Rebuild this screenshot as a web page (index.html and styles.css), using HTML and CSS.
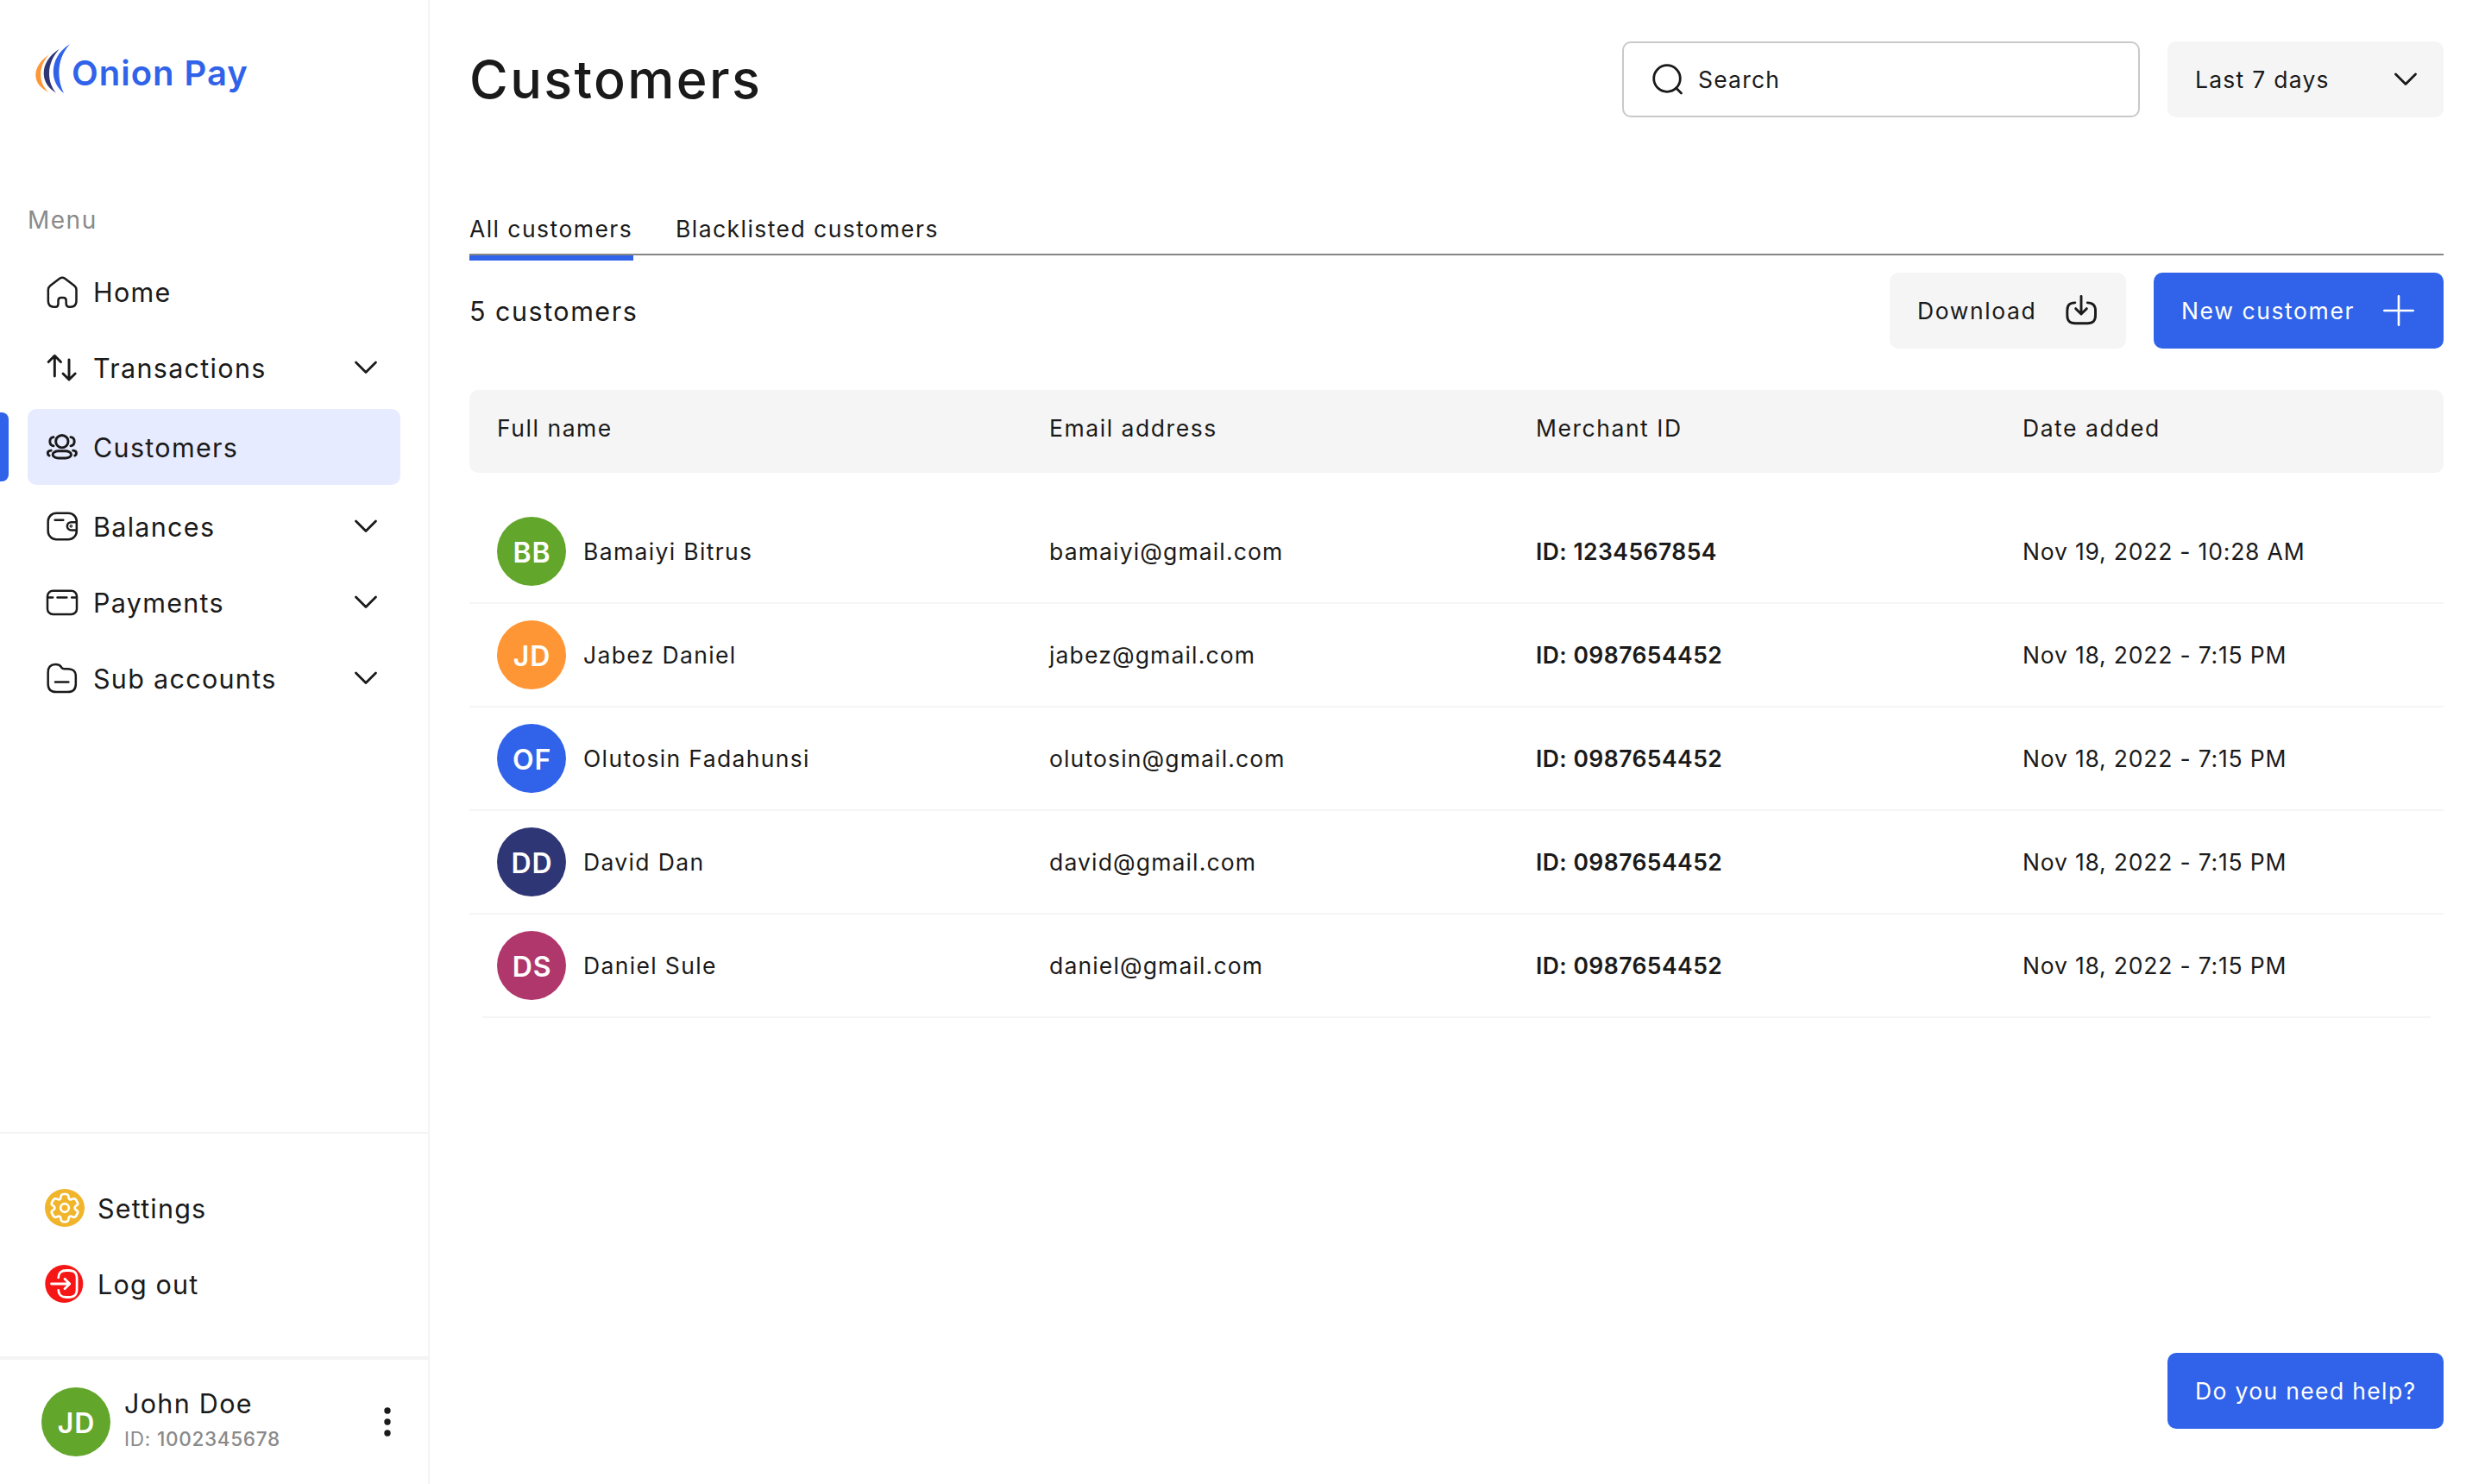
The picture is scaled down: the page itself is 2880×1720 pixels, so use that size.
FILE: index.html
```
<!DOCTYPE html>
<html lang="en">
<head>
    <meta charset="UTF-8">
    <meta name="viewport" content="width=device-width, initial-scale=1.0">
    <title>Onion Pay - Customers</title>
    <link rel="stylesheet" href="styles.css">
</head>
<body>
    <!-- shared icon -->
    <svg class="sprite" width="0" height="0">
        <symbol id="chevron" viewBox="0 0 30 20">
            <path d="M3.5 4 15 15.5 26.5 4" fill="none" stroke="currentColor" stroke-width="2.8" stroke-linecap="round" stroke-linejoin="round"/>
        </symbol>
    </svg>

    <div class="sidebar">
        <div class="logo">
            <svg width="40" height="57" viewBox="41 51 40 57">
                <path fill="#ff9635" d="M56.7 63.3C46 71 41.3 79 41.3 87c0 9 6.500 16 15.700 20.300C50 102 47.200 94 47.200 86.500 47.200 78 50.500 70.500 56.700 63.300Z"/>
                <path fill="#2f3676" d="M68.700 56.700C56 65 50.700 75 50.700 85c0 9.500 5.500 17.500 14.300 22.700C59.500 101 57 93.500 57 85c0-10.500 4.500-20 11.700-28.300Z"/>
                <path fill="#3063e9" d="M81 51C67 60 61.800 71.500 61.800 83.500 61.800 93.500 66.500 102 74 108c-3.800-7.500-5.600-15.500-5.600-24C68.400 71 73 60 81 51Z"/>
            </svg>
            <span>Onion Pay</span>
        </div>

        <p class="menu-title">Menu</p>
        <ul class="menu">
            <li>
                <svg class="icon" viewBox="0 0 24 24"><path d="M9.300 20.200v-2c0-1.400.6-2 2-2h1.500c1.400 0 2 .6 2 2v2.100c0 1.600.6 2.300 2 2.300h1c2.700 0 4.100-1.500 4.100-4V10.700c0-1.300-.4-2-1.500-2.900L13.900 2.900c-1.100-.8-2.500-.8-3.600 0L3.800 7.800C2.700 8.700 2.300 9.400 2.300 10.700v7.900c0 2.500 1.400 4 4.100 4h1c1.300 0 1.900-.8 1.900-2.400Z"/></svg>
                <a href="#">Home</a>
            </li>
            <li>
                <svg class="icon bold" viewBox="0 0 24 24"><path d="M6.800 18V4M2.500 8.100 6.800 3.800l4.300 4.300M16.800 6.500v13.800M12.600 16.200l4.200 4.200 4.300-4.200"/></svg>
                <a href="#">Transactions</a>
                <svg class="chevron"><use href="#chevron"/></svg>
            </li>
            <li class="active">
                <svg class="icon bold" viewBox="0 0 24 24"><circle cx="11.900" cy="8.200" r="4.300"/><rect x="5.500" y="14.900" width="12.800" height="4.900" rx="4" ry="2.450"/><path d="M6 5.200C4.500 5.400 3.500 6.600 3.500 8.200S4.500 11 6 11.300M18 5.200c1.500.2 2.500 1.400 2.500 3s-1 2.800-2.500 3.100M4.300 14.500c-1.300.1-2.300.8-2.300 1.900 0 .8.400 1.300 1 1.600M19.600 14.500c1.300.1 2.300.8 2.300 1.900 0 .8-.4 1.300-1 1.600"/></svg>
                <a href="#">Customers</a>
            </li>
            <li>
                <svg class="icon" viewBox="0 0 24 24"><rect x="2.200" y="2.800" width="19.900" height="18.300" rx="5.800"/><path d="M7 7.600h5.800M22 9.100h-3.500c-1.800 0-3 1.200-3 2.800s1.200 2.800 3 2.800H22"/><circle cx="18.200" cy="11.900" r=".35"/></svg>
                <a href="#">Balances</a>
                <svg class="chevron"><use href="#chevron"/></svg>
            </li>
            <li>
                <svg class="icon" viewBox="0 0 24 24"><rect x="1.800" y="4" width="20.400" height="16.400" rx="3.800"/><path d="M2 8.700h3.500M8.700 8.700h6.500M18.700 8.700h3.400"/></svg>
                <a href="#">Payments</a>
                <svg class="chevron"><use href="#chevron"/></svg>
            </li>
            <li>
                <svg class="icon" viewBox="0 0 24 24"><path d="M2.200 8c0-3.900 1.700-5.600 5.200-5.600 2.200 0 2.900.3 3.700 1.500l.6.9c.4.600.8.700 1.800.7h2.200c4.200 0 5.800 1.500 5.800 5.300v5.200c0 3.900-1.800 5.600-5.700 5.600H8c-4 0-5.800-1.700-5.800-5.600Z"/><path d="M7.200 14.700h9.200"/></svg>
                <a href="#">Sub accounts</a>
                <svg class="chevron"><use href="#chevron"/></svg>
            </li>
        </ul>

        <ul class="menu menu-bottom">
            <li>
                <svg class="round-icon" viewBox="0 0 46 44">
                    <ellipse cx="23" cy="22" rx="23" ry="22" fill="#f1b52c"/>
                    <g transform="translate(23 22) rotate(90) scale(1.600) translate(-12 -12)" fill="none" stroke="#fff" stroke-width="1.700">
                        <circle cx="12" cy="12" r="3"/>
                        <path d="M2 12.880v-1.760c0-1.040.850-1.900 1.900-1.900 1.810 0 2.550-1.280 1.640-2.850-.520-.9-.210-2.070.7-2.590l1.730-.990c.790-.470 1.810-.190 2.280.6l.110.190c.9 1.570 2.380 1.570 3.290 0l.110-.190c.470-.790 1.490-1.070 2.280-.6l1.730.990c.910.520 1.220 1.690.7 2.590-.910 1.570-.170 2.850 1.640 2.850 1.040 0 1.900.850 1.900 1.900v1.760c0 1.040-.850 1.900-1.900 1.900-1.810 0-2.550 1.280-1.640 2.850.520.910.210 2.070-.7 2.590l-1.730.990c-.790.470-1.810.190-2.280-.6l-.110-.190c-.9-1.570-2.380-1.570-3.290 0l-.110.190c-.470.790-1.490 1.070-2.280.6l-1.730-.990a1.900 1.900 0 0 1-.7-2.590c.910-1.570.170-2.850-1.640-2.850-1.050 0-1.900-.860-1.900-1.900Z"/>
                    </g>
                </svg>
                <a href="#">Settings</a>
            </li>
            <li>
                <svg class="round-icon" viewBox="0 0 46 44">
                    <circle cx="22.300" cy="22" r="22" fill="#f61616"/>
                    <path d="M15.700 14.800c.3-6 3-8.300 9.300-8.300h2.500c7 0 9.600 2.500 9.600 9.600v11.800c0 7-2.600 9.600-9.600 9.600H25c-6.300 0-9-2.300-9.300-8.200M7.500 22H28M23 16.200l5.800 5.800-5.800 5.800" fill="none" stroke="#fff" stroke-width="2.800" stroke-linecap="round" stroke-linejoin="round"/>
                </svg>
                <a href="#">Log out</a>
            </li>
        </ul>

        <div class="profile">
            <div class="avatar green">JD</div>
            <div class="profile-info">
                <p class="profile-name">John Doe</p>
                <p class="profile-id">ID: <b>1002345678</b></p>
            </div>
            <svg class="dots" width="8" height="36" viewBox="0 0 8 36">
                <circle cx="4" cy="5" r="3.700"/><circle cx="4" cy="18" r="3.700"/><circle cx="4" cy="31" r="3.700"/>
            </svg>
        </div>
    </div>

    <div class="main">
        <div class="header">
            <h1>Customers</h1>
            <div class="search">
                <svg width="38" height="38" viewBox="0 0 38 38"><circle cx="18" cy="18" r="15.300"/><path d="M28.500 29 34.500 35"/></svg>
                <span>Search</span>
            </div>
            <div class="period">
                <span>Last 7 days</span>
                <svg class="chevron"><use href="#chevron"/></svg>
            </div>
        </div>

        <div class="tabs">
            <a class="tab selected" href="#">All customers</a>
            <a class="tab" href="#">Blacklisted customers</a>
        </div>

        <div class="toolbar">
            <p class="count">5 customers</p>
            <button class="btn download">
                Download
                <svg class="icon bold" viewBox="0 0 24 24"><path d="M12 2v11.600M8.200 10.600l3.800 3.800 3.800-3.800M7.700 6.500C3.900 6.500 2.300 8.300 2.300 12v3.300c0 3.900 1.700 5.500 5.600 5.500h8.400c3.900 0 5.600-1.600 5.600-5.500V12c0-3.700-1.700-5.500-5.500-5.500"/></svg>
            </button>
            <button class="btn new">
                New customer
                <svg width="36" height="36" viewBox="0 0 36 36"><path d="M18 1.300v33.400M1.300 18h33.400"/></svg>
            </button>
        </div>

        <div class="table">
            <div class="row head">
                <span>Full name</span>
                <span>Email address</span>
                <span>Merchant ID</span>
                <span>Date added</span>
            </div>
            <div class="row">
                <div class="name"><div class="avatar green">BB</div>Bamaiyi Bitrus</div>
                <span class="email">bamaiyi@gmail.com</span>
                <span class="merchant">ID: 1234567854</span>
                <span class="date">Nov 19, 2022 - 10:28 AM</span>
            </div>
            <div class="row">
                <div class="name"><div class="avatar orange">JD</div>Jabez Daniel</div>
                <span class="email">jabez@gmail.com</span>
                <span class="merchant">ID: 0987654452</span>
                <span class="date">Nov 18, 2022 - 7:15 PM</span>
            </div>
            <div class="row">
                <div class="name"><div class="avatar blue">OF</div>Olutosin Fadahunsi</div>
                <span class="email">olutosin@gmail.com</span>
                <span class="merchant">ID: 0987654452</span>
                <span class="date">Nov 18, 2022 - 7:15 PM</span>
            </div>
            <div class="row">
                <div class="name"><div class="avatar navy">DD</div>David Dan</div>
                <span class="email">david@gmail.com</span>
                <span class="merchant">ID: 0987654452</span>
                <span class="date">Nov 18, 2022 - 7:15 PM</span>
            </div>
            <div class="row last">
                <div class="name"><div class="avatar pink">DS</div>Daniel Sule</div>
                <span class="email">daniel@gmail.com</span>
                <span class="merchant">ID: 0987654452</span>
                <span class="date">Nov 18, 2022 - 7:15 PM</span>
            </div>
        </div>
    </div>

    <button class="btn help">Do you need help?</button>
</body>
</html>
```
FILE: styles.css
```
* {
    box-sizing: border-box;
    margin: 0;
    padding: 0;
}

body {
    display: flex;
    height: 1720px;
    background-color: #fff;
    color: #1a1a1a;
    font-family: Inter, "Liberation Sans", sans-serif;
    font-size: 26.5px;
    letter-spacing: 1.45px;
    overflow: hidden;
}

a {
    color: inherit;
    text-decoration: none;
}

ul {
    list-style: none;
}

.sprite {
    position: absolute;
}

/* Sidebar */
.sidebar {
    width: 498px;
    flex: none;
    display: flex;
    flex-direction: column;
    border-right: 2px solid #f4f4f4;
}

.logo {
    display: flex;
    align-items: center;
    gap: 2px;
    height: 57px;
    margin: 51px 0 0 41px;
    color: #3063e9;
    font-size: 40px;
    font-weight: 600;
    letter-spacing: 1px;
}

.logo span {
    padding-top: 9px;
}

.menu-title {
    margin: 131px 0 0 32px;
    height: 32px;
    line-height: 32px;
    color: #8a8a8a;
    font-size: 28px;
    letter-spacing: 1.5px;
}

.menu {
    margin-top: 23px;
    padding: 0 32px;
    font-size: 30.5px;
    letter-spacing: 1.3px;
}

.menu li {
    display: flex;
    align-items: center;
    height: 88px;
    padding: 0 25px 0 20px;
}

.menu a {
    flex: 1;
    padding-left: 16px;
}

.menu li.active {
    position: relative;
    margin: 4px 0;
    background-color: #e7ebff;
    border-radius: 10px;
}

/* blue marker on the screen edge */
.menu li.active::before {
    content: "";
    position: absolute;
    left: -32px;
    top: 4px;
    width: 10px;
    height: 80px;
    background-color: #3063e9;
    border-radius: 0 8px 8px 0;
}

.icon {
    width: 40px;
    height: 40px;
    flex: none;
    fill: none;
    stroke: #1a1a1a;
    stroke-width: 1.5;
    stroke-linecap: round;
    stroke-linejoin: round;
}

.icon.bold {
    stroke-width: 1.75;
}

.chevron {
    width: 30px;
    height: 20px;
    flex: none;
}

.menu-bottom {
    margin-top: auto;
    height: 260px;
    padding-top: 42px;
    border-top: 2px solid #f4f4f4;
    letter-spacing: 1.2px;
}

.round-icon {
    width: 46px;
    height: 44px;
    flex: none;
}

.menu-bottom a {
    padding-left: 15px;
}

.profile {
    display: flex;
    height: 148px;
    padding: 32px 43px 0 48px;
    border-top: 4px solid #f4f4f4;
}

.profile-info {
    flex: 1;
    padding-left: 16px;
}

.profile-name {
    font-size: 30.5px;
    line-height: 38px;
    letter-spacing: 1.3px;
}

.profile-id {
    margin-top: 6px;
    color: #8a8a8a;
    font-size: 22.5px;
    line-height: 32px;
    letter-spacing: 0.7px;
}

.profile-id b {
    font-weight: 500;
}

.dots {
    margin-top: 22px;
    fill: #1a1a1a;
}

.avatar {
    display: flex;
    justify-content: center;
    align-items: center;
    width: 80px;
    height: 80px;
    flex: none;
    padding: 2px 0 0 1px;
    border-radius: 50%;
    color: #fff;
    font-size: 32px;
    font-weight: 600;
    letter-spacing: 0.8px;
}

.green {
    background-color: #62a62c;
}

.orange {
    background-color: #ff9635;
}

.blue {
    background-color: #3063e9;
}

.navy {
    background-color: #2f3676;
}

.pink {
    background-color: #b0376c;
}

/* Main content */
.main {
    flex: 1;
    padding: 48px 48px 0 46px;
}

.header {
    display: flex;
    align-items: center;
    gap: 32px;
    height: 88px;
}

h1 {
    flex: 1;
    font-size: 61px;
    font-weight: 550;
    letter-spacing: 2.4px;
}

.search {
    display: flex;
    align-items: center;
    gap: 16px;
    width: 600px;
    height: 88px;
    padding-left: 32px;
    border: 2px solid #c9c9c9;
    border-radius: 10px;
    letter-spacing: 1.2px;
}

.search svg {
    fill: none;
    stroke: #1a1a1a;
    stroke-width: 2.8;
    stroke-linecap: round;
}

.period {
    display: flex;
    justify-content: space-between;
    align-items: center;
    width: 320px;
    height: 88px;
    padding: 0 29px 0 32px;
    background-color: #f5f5f5;
    border-radius: 10px;
    letter-spacing: 1.25px;
}

.tabs {
    display: flex;
    gap: 49px;
    height: 60px;
    margin-top: 100px;
    border-bottom: 2px solid #868686;
}

.tab {
    height: 66px;
    line-height: 58px;
}

.tab.selected {
    position: relative;
    width: 190px;
    white-space: nowrap;
}

/* indicator hangs just below the grey line */
.tab.selected::after {
    content: "";
    position: absolute;
    left: 0;
    bottom: 0;
    width: 100%;
    height: 6px;
    background-color: #3063e9;
}

.toolbar {
    display: flex;
    align-items: center;
    gap: 32px;
    height: 88px;
    margin-top: 20px;
}

.count {
    flex: 1;
    font-size: 30.5px;
    letter-spacing: 1.5px;
}

.btn {
    display: flex;
    justify-content: space-between;
    align-items: center;
    height: 88px;
    border: none;
    border-radius: 10px;
    color: inherit;
    font: inherit;
    letter-spacing: 1.6px;
}

.download {
    width: 274px;
    padding: 0 32px;
    background-color: #f5f5f5;
}

.new {
    width: 336px;
    padding: 0 34px 0 32px;
    background-color: #3063e9;
    color: #fff;
}

.new svg {
    fill: none;
    stroke: #fff;
    stroke-width: 2.6;
    stroke-linecap: round;
}

.help {
    position: absolute;
    right: 48px;
    bottom: 64px;
    width: 320px;
    padding-left: 32px;
    background-color: #3063e9;
    color: #fff;
    letter-spacing: 1.35px;
}

/* Customers table */
.table {
    margin-top: 48px;
}

.row {
    display: grid;
    grid-template-columns: 640px 564px 564px 1fr;
    align-items: center;
    height: 120px;
    padding-left: 32px;
    border-bottom: 2px solid #f5f5f5;
}

.row.head {
    height: 96px;
    margin-bottom: 32px;
    padding-bottom: 8px;
    background-color: #f5f5f5;
    border: none;
    border-radius: 10px;
    letter-spacing: 1.55px;
}

.row.last {
    border-image: linear-gradient(to right, transparent 16px, #f5f5f5 16px, #f5f5f5 2272px, transparent 2272px) 1;
}

.name {
    display: flex;
    align-items: center;
    gap: 20px;
    letter-spacing: 1.35px;
}

.email {
    letter-spacing: 1.15px;
}

.merchant {
    font-weight: 600;
    letter-spacing: 0.45px;
}

.date {
    letter-spacing: 0.8px;
}
```
